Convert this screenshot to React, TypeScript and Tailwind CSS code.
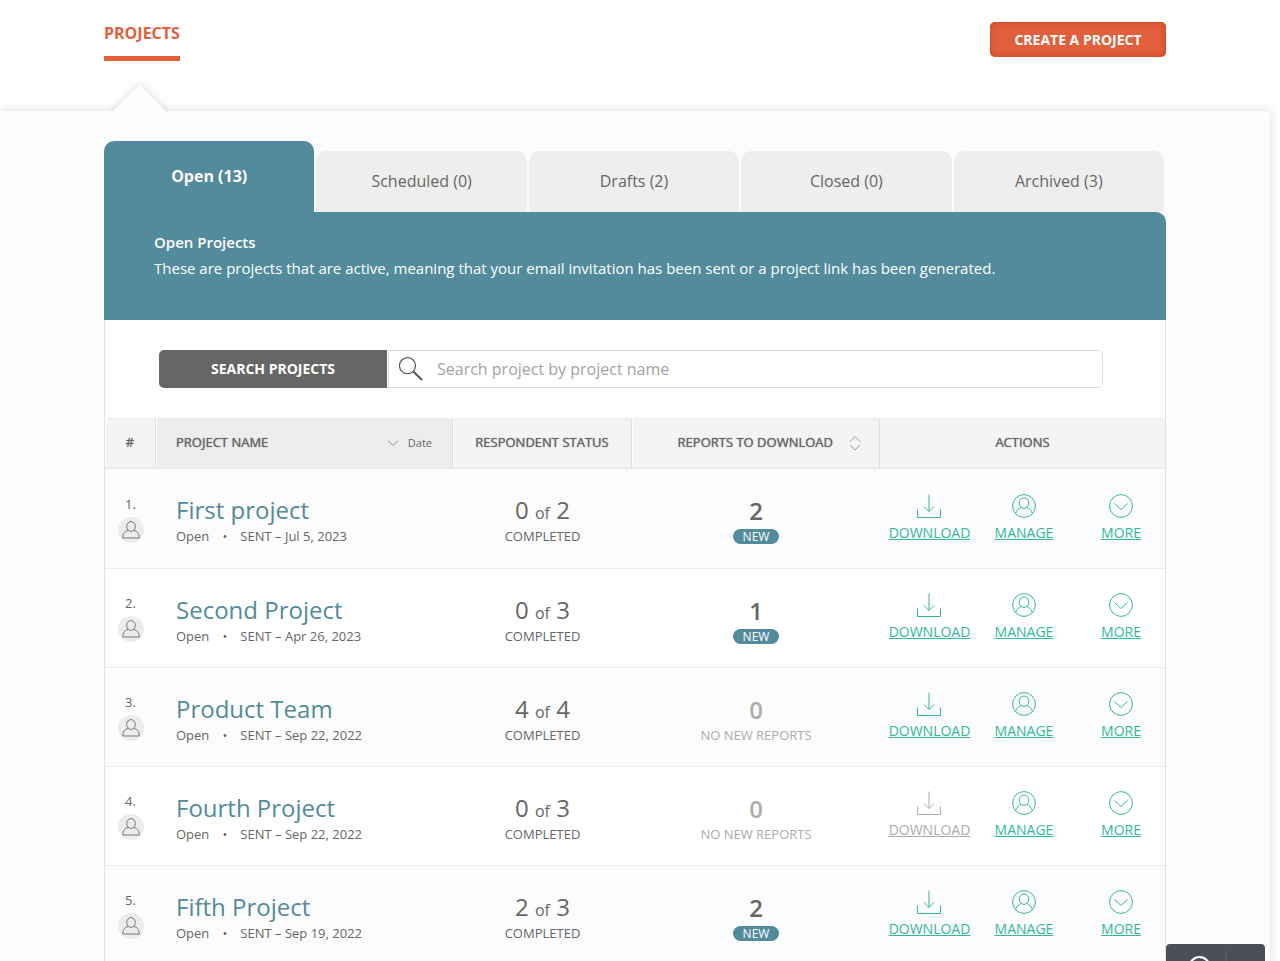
import { useState } from 'react';
import { clsx } from 'clsx';

type Project = {
    id: number;
    name: string;
    sent: string;
    completed: number;
    total: number;
    reports: number;
    canDownload: boolean;
};

const TABS = [
    { label: 'Open', count: 13 },
    { label: 'Scheduled', count: 0 },
    { label: 'Drafts', count: 2 },
    { label: 'Closed', count: 0 },
    { label: 'Archived', count: 3 }
];

const PROJECTS: Project[] = [
    { id: 1, name: 'First project', sent: 'Jul 5, 2023', completed: 0, total: 2, reports: 2, canDownload: true },
    { id: 2, name: 'Second Project', sent: 'Apr 26, 2023', completed: 0, total: 3, reports: 1, canDownload: true },
    { id: 3, name: 'Product Team', sent: 'Sep 22, 2022', completed: 4, total: 4, reports: 0, canDownload: true },
    { id: 4, name: 'Fourth Project', sent: 'Sep 22, 2022', completed: 0, total: 3, reports: 0, canDownload: false },
    { id: 5, name: 'Fifth Project', sent: 'Sep 19, 2022', completed: 2, total: 3, reports: 2, canDownload: true }
];

function DownloadIcon() {
    return (
        <svg width="24" height="24" viewBox="0 0 24 24" fill="none" stroke="currentColor" aria-hidden="true">
            <path d="M.5 15.5v8h23v-8M12 .5v17M7 12.5l5 5 5-5" />
        </svg>
    );
}

function ManageIcon() {
    return (
        <svg width="24" height="24" viewBox="0 0 24 24" fill="none" stroke="currentColor" aria-hidden="true">
            <circle cx="12" cy="12" r="11.4" />
            <ellipse cx="12" cy="9.2" rx="4.8" ry="5.2" />
            <path d="M3.6 19.6c1-3.1 3-5 5.7-6.1M14.7 13.5c2.7 1.1 4.7 3 5.7 6.1" />
        </svg>
    );
}

function MoreIcon() {
    return (
        <svg width="24" height="24" viewBox="0 0 24 24" fill="none" stroke="currentColor" aria-hidden="true">
            <circle cx="12" cy="12" r="11.4" />
            <path d="M5.5 9.5l6.5 6 6.5-6" />
        </svg>
    );
}

function PersonIcon() {
    return (
        <svg width="26" height="26" viewBox="0 0 26 26" fill="none" stroke="#777" aria-hidden="true">
            <circle cx="13" cy="13" r="13" fill="#ececec" stroke="none" />
            <ellipse cx="13" cy="9.5" rx="4.3" ry="4.9" />
            <path d="M10 13.5c-3.2.8-5 2.6-5.3 7.5h16.6c-.3-4.9-2.1-6.7-5.3-7.5" />
        </svg>
    );
}

function SearchIcon() {
    return (
        <svg width="24" height="24" viewBox="0 0 24 24" fill="none" stroke="#555" aria-hidden="true">
            <circle cx="8.5" cy="8.7" r="8" strokeWidth="1.2" />
            <path d="M14.3 14.5l8.7 8.5" strokeWidth="2" />
        </svg>
    );
}

const headBase =
    'border-b-2 border-t border-y-[#ececec] p-0 text-[13px] font-normal [text-shadow:0_0_1px_#666]';
const headCell = clsx(headBase, 'border-r border-r-[#dedede] shadow-[inset_1px_0_0_#fff]');
const bodyCell = 'border-b border-[#ececec] p-0';
const actionLink = 'flex flex-col items-center gap-1 text-sm leading-[22px] underline';

function ProjectRow({ project }: { project: Project }) {
    const hasReports = project.reports > 0;

    return (
        <tr className="h-[99px] first:h-[100px] odd:bg-[#fcfcfc] even:bg-white">
            <td className={bodyCell}>
                <div className="flex flex-col items-center gap-1 text-[13px] leading-[18px]">
                    <span>{project.id}.</span>
                    <PersonIcon />
                </div>
            </td>
            <td className={clsx(bodyCell, 'pl-5 pt-[3px]')}>
                <a href="#project" className="block text-2xl leading-8 text-[#528b9b]">
                    {project.name}
                </a>
                <p className="flex text-[13px] leading-5">
                    <span>Open</span>
                    <span className="w-[31px] text-center">•</span>
                    <span>SENT – {project.sent}</span>
                </p>
            </td>
            <td className={clsx(bodyCell, 'pt-[3px] text-center')}>
                <p className="text-2xl leading-8">
                    {project.completed} <span className="text-base">of</span> {project.total}
                </p>
                <p className="text-[13px] leading-5">COMPLETED</p>
            </td>
            <td className={clsx(bodyCell, 'pt-[3px] text-center', !hasReports && 'text-[#acacac]')}>
                <p className="pt-1 text-2xl font-semibold leading-[30px]">{project.reports}</p>
                {hasReports ? (
                    <p className="mx-auto mb-1 mt-[3px] w-[46px] rounded-full bg-[#528b9b] text-xs leading-[15px] text-white">
                        NEW
                    </p>
                ) : (
                    <p className="pb-[2px] text-[13px] leading-5">NO NEW REPORTS</p>
                )}
            </td>
            <td className={clsx(bodyCell, 'text-[#30b999]')}>
                <div className="flex pr-2">
                    <div className="flex w-[99px] justify-center">
                        <a href="#download" className={clsx(actionLink, !project.canDownload && 'text-[#acacac]')}>
                            <DownloadIcon />
                            DOWNLOAD
                        </a>
                    </div>
                    <div className="flex w-[90px] justify-center">
                        <a href="#manage" className={actionLink}>
                            <ManageIcon />
                            MANAGE
                        </a>
                    </div>
                    <div className="flex flex-1 justify-center pl-4">
                        <button type="button" className={actionLink}>
                            <MoreIcon />
                            MORE
                        </button>
                    </div>
                </div>
            </td>
        </tr>
    );
}

export default function App() {
    const [activeTab, setActiveTab] = useState('Open');
    const [search, setSearch] = useState('');

    const visible = PROJECTS.filter((p) => p.name.toLowerCase().includes(search.toLowerCase()));

    return (
        <div className="h-screen overflow-hidden bg-white pr-[10px] font-['Open_Sans',sans-serif] text-[#666]">
            <header className="mx-auto flex h-[111px] max-w-[1062px] items-start justify-between">
                <nav className="relative pt-[22px]">
                    <a
                        href="#projects"
                        className="block border-b-[5px] border-[#e25f3b] pb-3 text-base font-bold leading-[22px] text-[#e25f3b]"
                    >
                        PROJECTS
                    </a>
                    {/* arrow pointing at the active nav item */}
                    <span className="absolute left-0 top-[71px] h-10 w-[72px] overflow-hidden">
                        <span className="absolute left-[17px] top-[21px] size-[37px] rotate-45 bg-[#fcfcfc] shadow-[0_0_10px_rgba(0,0,0,0.15)]" />
                    </span>
                </nav>
                <button
                    type="button"
                    className="mt-[22px] h-[35px] w-44 rounded-[5px] bg-[#e25f3b] text-sm font-bold text-white shadow-[inset_0_0_6px_#c8401c]"
                >
                    CREATE A PROJECT
                </button>
            </header>

            <main className="bg-[#fcfcfc] pt-[30px] shadow-[0_0_10px_rgba(0,0,0,0.15)]">
                <div className="mx-auto max-w-[1062px]">
                    <div className="grid grid-cols-5 items-end" role="tablist">
                        {TABS.map((tab) => {
                            const active = tab.label === activeTab;
                            return (
                                <button
                                    key={tab.label}
                                    type="button"
                                    role="tab"
                                    aria-selected={active}
                                    onClick={() => setActiveTab(tab.label)}
                                    className={clsx(
                                        'mr-[2px] rounded-t-[10px] pb-[2px] text-base',
                                        active ? 'h-[71px] bg-[#528b9b] font-bold text-white' : 'h-[61px] bg-[#eee]'
                                    )}
                                >
                                    {tab.label} ({tab.count})
                                </button>
                            );
                        })}
                    </div>

                    <section className="h-[108px] rounded-tr-[10px] bg-[#528b9b] px-[50px] pt-[17px] text-white">
                        <h2 className="text-[15px] font-semibold leading-[26px]">Open Projects</h2>
                        <p className="text-[15px] leading-[26px]">
                            These are projects that are active, meaning that your email invitation has been sent or a project link
                            has been generated.
                        </p>
                    </section>

                    <div className="border-x border-[#e2e2e2] bg-white">
                        <form
                            className="flex pb-[30px] pl-[54px] pr-[62px] pt-[30px]"
                            onSubmit={(e) => e.preventDefault()}
                        >
                            <button type="submit" className="h-[38px] w-[228px] rounded-l-[5px] bg-[#666] text-sm font-bold text-white">
                                SEARCH PROJECTS
                            </button>
                            <label className="ml-px flex flex-1 items-center gap-[14px] rounded-r-[5px] border border-[#dcdcdc] pl-[10px]">
                                <SearchIcon />
                                <input
                                    type="text"
                                    aria-label="Search project by project name"
                                    placeholder="Search project by project name"
                                    value={search}
                                    onChange={(e) => setSearch(e.target.value)}
                                    className="flex-1 text-base outline-none placeholder:text-[#a3a3a3]"
                                />
                            </label>
                        </form>

                        <table className="w-full table-fixed border-separate border-spacing-0">
                            <colgroup>
                                <col className="w-[51px]" />
                                <col className="w-[297px]" />
                                <col className="w-[179px]" />
                                <col className="w-[248px]" />
                                <col />
                            </colgroup>
                            <thead>
                                <tr className="h-[51px]">
                                    <th className={clsx(headCell, 'rounded-tl-[5px] bg-[#f4f4f4]')}>#</th>
                                    <th className={clsx(headCell, 'bg-[#ededed]')}>
                                        <div className="flex items-center justify-between px-5">
                                            <span>PROJECT NAME</span>
                                            <button
                                                type="button"
                                                className="flex items-center gap-[10px] text-[11px] [text-shadow:none]"
                                            >
                                                <svg width="10" height="6" viewBox="0 0 10 6" fill="none" stroke="#888" aria-hidden="true">
                                                    <path d="M0 .5l5 5 5-5" />
                                                </svg>
                                                Date
                                            </button>
                                        </div>
                                    </th>
                                    <th className={clsx(headCell, 'bg-[#f4f4f4]')}>RESPONDENT STATUS</th>
                                    <th className={clsx(headCell, 'bg-[#f4f4f4]')}>
                                        <div className="flex items-center justify-end gap-4 pr-[18px]">
                                            <span>REPORTS TO DOWNLOAD</span>
                                            <button type="button" aria-label="Sort by reports">
                                                <svg width="12" height="16" viewBox="0 0 12 16" fill="none" stroke="#999" aria-hidden="true">
                                                    <path d="M1 6.5l5-5 5 5M1 10l5 5 5-5" />
                                                </svg>
                                            </button>
                                        </div>
                                    </th>
                                    <th className={clsx(headBase, 'rounded-tr-[5px] bg-[#f4f4f4]')}>ACTIONS</th>
                                </tr>
                            </thead>
                            <tbody>
                                {visible.map((project) => (
                                    <ProjectRow key={project.id} project={project} />
                                ))}
                            </tbody>
                        </table>
                    </div>
                </div>
            </main>

            <button
                type="button"
                aria-label="Help"
                className="fixed bottom-0 right-[15px] flex h-[17px] w-[99px] overflow-hidden rounded-t bg-[#4c4f5a] pl-[23px] pt-[6px]"
            >
                <svg width="40" height="24" viewBox="0 0 40 24" fill="none" aria-hidden="true">
                    <circle cx="10.5" cy="17" r="10" stroke="#fff" strokeWidth="2" />
                    <path d="M37 0v24" stroke="#666" />
                </svg>
            </button>
        </div>
    );
}
